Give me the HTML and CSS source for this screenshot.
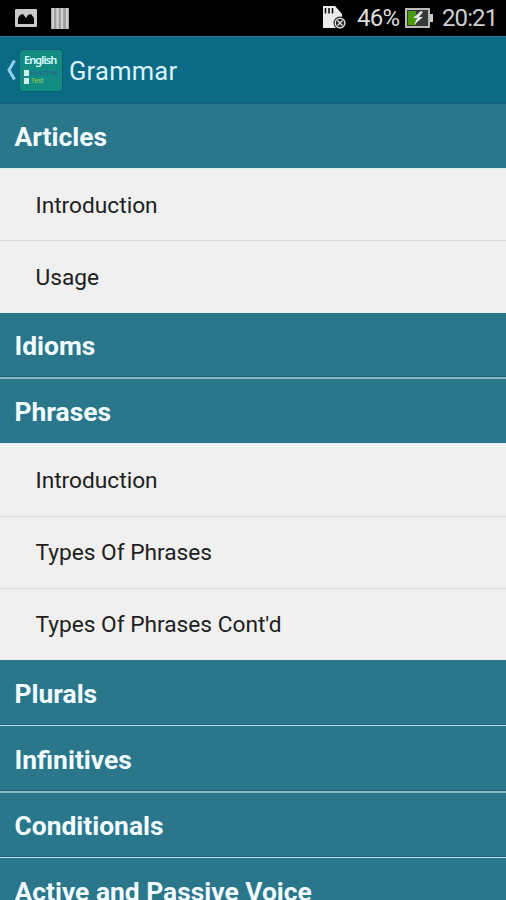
FILE: index.html
```html
<!DOCTYPE html>
<html lang="en">
<head>
<meta charset="utf-8">
<title>Grammar</title>
<link rel="stylesheet" href="styles.css">
</head>
<body>
<div class="status">
  <svg class="picture" width="22" height="18" viewBox="0 0 22 18"><rect width="22" height="18" rx="1" fill="#cbcbcb"/><path d="M3 15V9L5 6L8 5L11 9L13 6L16 5L19 9V15Z" fill="#080808"/></svg>
  <svg class="bars" width="18" height="21" viewBox="0 0 18 21"><path fill="#999" d="M0 0H18V21H0Z"/><path stroke="#d0d0d0" stroke-width="2.500" d="M2 0V21M6.500 0V21M11 0V21M16 0V21"/></svg>
  <svg class="card" width="25" height="24" viewBox="0 0 25 24"><path fill="#ececec" d="M1 0H13L20 8V22H1Z"/><path stroke="#111" stroke-width="1.600" d="M3.500 2V7.500M7 2V7.500M10.500 2V7.500"/><circle cx="18" cy="17" r="6.500" fill="#050505"/><circle cx="18" cy="17" r="4.800" fill="#222" stroke="#ddd" stroke-width="1.500"/><path stroke="#ddd" stroke-width="1.500" d="M15.500 14.500L20.500 19.500M20.500 14.500L15.500 19.500"/></svg>
  <span class="percent">46%</span>
  <svg class="battery" width="28" height="20" viewBox="0 0 28 20"><rect x="1" y="1" width="23" height="18" fill="#373b37" stroke="#bbb" stroke-width="2"/><path fill="#ccc" d="M25 6H28V14H25Z"/><path fill="#489a09" d="M3 3H11V17H3Z"/><path fill="#e4e4e4" d="M16 3L8 10H12L9 17L18 9H14L18 4Z"/></svg>
  <span class="clock">20:21</span>
</div>
<header class="bar">
  <svg class="back" width="10" height="22" viewBox="0 0 10 22"><path d="M8.500 1.500L3 11L8.500 20.500" fill="none" stroke="#8dd0ee" stroke-width="3"/></svg>
  <div class="logo">
    <div class="logo-name">English</div>
    <div class="logo-line grammar"><i></i>Grammar</div>
    <div class="logo-line test"><i></i>Test</div>
  </div>
  <h1><span>Grammar</span></h1>
</header>
<main>
  <h2 class="first"><span>Articles</span></h2>
  <ul class="short">
    <li><span>Introduction</span></li>
    <li><span>Usage</span></li>
  </ul>
  <h2><span>Idioms</span></h2>
  <h2 class="ruled soft"><span>Phrases</span></h2>
  <ul>
    <li><span>Introduction</span></li>
    <li><span>Types Of Phrases</span></li>
    <li><span>Types Of Phrases Cont'd</span></li>
  </ul>
  <h2><span>Plurals</span></h2>
  <h2 class="ruled"><span>Infinitives</span></h2>
  <h2 class="ruled soft"><span>Conditionals</span></h2>
  <h2 class="ruled"><span>Active and Passive Voice</span></h2>
</main>
</body>
</html>
```
FILE: styles.css
```css
* { box-sizing: border-box; }
body {
  margin: 0;
  height: 900px;
  overflow: hidden;
  background: #f0f0f0;
  font-family: Roboto, "Liberation Sans", sans-serif;
}
.status {
  height: 36px;
  padding: 0 10px 0 15px;
  display: flex;
  align-items: center;
  background: #000;
  color: #cecece;
  font-size: 24px;
  line-height: 36px;
}
.bars { margin-left: 14px; }
.card { margin-left: auto; }
.percent { margin-left: 10px; width: 42px; letter-spacing: -0.8px; color: #ddd; }
.battery { margin-left: 6px; }
.clock { margin-left: 9px; width: 54px; letter-spacing: -0.9px; }
.bar {
  height: 68px;
  display: flex;
  align-items: center;
  padding-left: 6px;
  background: #0b6b86;
  border-top: 1px solid #257e96;
  border-bottom: 1px solid #155f77;
}
.back { margin-right: 4px; }
.logo {
  width: 42px;
  height: 41px;
  padding: 3px 0 0 4px;
  border-radius: 3px;
  background: #128c83;
  box-shadow: 0 0 1px 1px #0a6070;
}
.logo-name {
  width: 36px;
  color: #dff;
  font: 600 11px/13px "Noto Sans", sans-serif;
  letter-spacing: -0.9px;
}
.logo-line {
  display: flex;
  align-items: center;
  gap: 2px;
  font-size: 6.5px;
  line-height: 8px;
}
.logo-line i { width: 5px; height: 6px; background: #d2eeee; }
.grammar { margin-top: 3px; color: #285f91; }
.test { color: #a5d13d; }
h1, h2, ul { margin: 0; padding: 0; }
h1 {
  margin-left: 7px;
  padding-top: 1px;
  color: #d9f3fb;
  font-size: 25.5px;
  letter-spacing: 0.25px;
  line-height: 30px;
  font-weight: 400;
}
h2 {
  height: 65px;
  padding: 2px 0 0 14.5px;
  display: flex;
  align-items: center;
  background: #2a768b;
  color: #f2fbff;
  font-size: 26.4px;
  line-height: 30px;
  font-weight: 700;
}
.first { height: 64px; }
.ruled {
  height: 66px;
  padding-top: 3px;
  border-top: 1px solid #b8e6ec;
  box-shadow: 0 -1px #1c6076;
}
.soft { border-top: 2px solid #8db8c2; padding-top: 2px; }
ul { list-style: none; border-top: 1px solid #d8f0f4; }
li {
  height: 72px;
  padding-left: 35.5px;
  display: flex;
  align-items: center;
  color: #202020;
  font-size: 22.7px;
  line-height: 28px;
}
li:first-child { padding-top: 2px; }
.short li:first-child { height: 71px; }
.short li:last-child { padding-top: 1px; height: 73px; }
li + li { border-top: 1px solid #d9d9d9; }
.short + h2 { height: 64px; padding-top: 1px; }
```
